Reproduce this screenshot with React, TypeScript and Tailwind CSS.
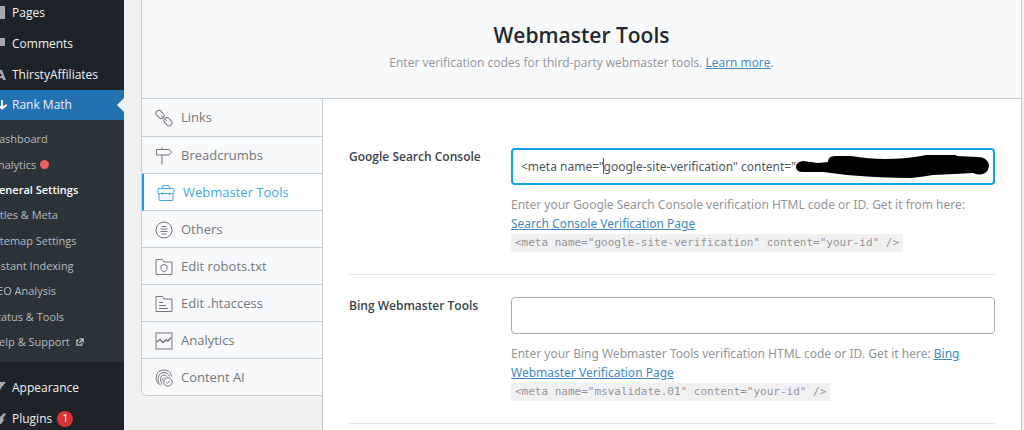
import clsx from "clsx";
import React from "react";

type IconProps = { children: React.ReactNode };

const Icon = ({ children }: IconProps) => (
  <svg viewBox="0 0 18 18" className="size-[18px] shrink-0" fill="none" stroke="currentColor" strokeWidth="1" aria-hidden="true">
    {children}
  </svg>
);

const tabs = [
  {
    label: "Links",
    icon: (
      <>
        <rect x="0.5" y="2.5" width="9" height="5.800" rx="2.900" transform="rotate(45 5 5.4)" />
        <rect x="8.500" y="9.800" width="9" height="5.800" rx="2.900" transform="rotate(45 13 12.700)" />
        <path d="M6 6.500l6 5.500" />
      </>
    ),
  },
  {
    label: "Breadcrumbs",
    icon: <path d="M7 .5v2M7 8v9.500M1.500 2.500h12.500l2.500 2.750-2.500 2.750h-12.500z" />,
  },
  {
    label: "Webmaster Tools",
    icon: (
      <>
        <rect x="1" y="4.500" width="16" height="5" rx="1" />
        <path d="M5.500 4.500V3q0-1.500 1.500-1.500h4q1.500 0 1.500 1.500v1.500M2 9.500v6q0 1 1 1h12q1 0 1-1v-6M5.500 8.500V11M12.500 8.500V11" />
      </>
    ),
  },
  {
    label: "Others",
    icon: (
      <>
        <circle cx="9" cy="9" r="8" />
        <path d="M6.500 5.500h5M5.500 8h7M5.500 10.500h7M6.500 13h5" />
      </>
    ),
  },
  {
    label: "Edit robots.txt",
    icon: (
      <>
        <path d="M1 16.500v-15h6.500l1.500 2.500h8v12.500z" />
        <path d="M9 6.500l3 1.200v2.500c0 2-1.500 3-3 3.800-1.500-.8-3-1.800-3-3.800V7.700z" />
      </>
    ),
  },
  {
    label: "Edit .htaccess",
    icon: (
      <>
        <path d="M1 16.500v-15h6.500l1.500 2.500h8v12.500z" />
        <path d="M4 7.500h4M4 10.500h7M4 13.500h9" />
      </>
    ),
  },
  {
    label: "Analytics",
    icon: (
      <>
        <rect x="1" y="1" width="16" height="16" />
        <path d="M1.500 10L5 7.500l3 3 3-2.500 2 1 3-3.500" strokeWidth="1.500" />
      </>
    ),
  },
  {
    label: "Content AI",
    icon: (
      <>
        <path d="M3 14.500C-.5 10 .8 1 9 1c4.500 0 7 3 7.500 6.500" />
        <path d="M5.500 16.500C1.500 12 2.500 3.500 9 3.500c3 0 4.800 1.700 5.400 4" />
        <path d="M7.500 15.500C4.500 12 4.800 6 9 6c1.500 0 2.500.6 3 1.700M8 12c-.6-2 0-3.500 1.500-3.500" />
        <circle cx="13" cy="13" r="4.200" />
        <path d="M11.200 13l1.300 1.300 2.300-2.600" />
      </>
    ),
  },
];

const subMenu = [
  "Dashboard",
  "Analytics",
  "General Settings",
  "Titles & Meta",
  "Sitemap Settings",
  "Instant Indexing",
  "SEO Analysis",
  "Status & Tools",
  "Help & Support",
];

type MenuItemProps = {
  label: string;
  icon: React.ReactNode;
  active?: boolean;
  count?: number;
};

const MenuItem = ({ label, icon, active, count }: MenuItemProps) => (
  <a
    href="#"
    className={clsx(
      "relative flex items-center gap-1 pl-7 text-[12px] text-[#f0f0f1]",
      active ? "h-[30px] bg-[#2271b1]" : "h-[31px]"
    )}
  >
    <svg viewBox="0 0 16 16" className="size-4 shrink-0 text-[#a7aaad]" fill="currentColor" aria-hidden="true">
      {icon}
    </svg>
    <span className="whitespace-nowrap">{label}</span>
    {count && (
      <span className="ml-px flex size-4 items-center justify-center rounded-full bg-[#d63638] text-[10px] text-white">{count}</span>
    )}
    {active && (
      <span className="absolute top-1/2 right-0 -translate-y-1/2 border-y-[7px] border-r-[7px] border-y-transparent border-r-[#f0f0f1]" />
    )}
  </a>
);

const Sidebar = () => (
  <aside className="w-[124px] shrink-0 overflow-hidden bg-[#1d2327]">
    <nav className="-ml-9 w-40">
      <div className="-mt-[3px]">
        <MenuItem label="Pages" icon={<path d="M2 1h11v13H2z" />} />
        <MenuItem label="Comments" icon={<path d="M1 2h12v8H8l-4 4v-4H1z" />} />
        <MenuItem label="ThirstyAffiliates" icon={<path d="M7 3h3l4 10h-3l-1-2H6l-1 2H2zM8 6L7 9h3z" fillRule="evenodd" />} />
        <MenuItem label="Rank Math" active icon={<path d="M9 3h2v6l4-2v2l-5 4-4-4h3z" fill="#f0f0f1" />} />
      </div>
      <ul className="grid h-[242px] auto-rows-fr bg-[#2c3338] py-[7px]">
        {subMenu.map((item) => (
          <li key={item} className="flex items-center pl-[27px]">
            <a
              href="#"
              className={clsx(
                "flex items-center text-[11px] whitespace-nowrap",
                item === "General Settings" ? "font-semibold text-white" : "text-[#b4b9be]"
              )}
            >
              {item}
              {item === "Analytics" && <span className="ml-1 size-[9px] rounded-full bg-[#ee5e5e]" />}
              {item === "Help & Support" && (
                <svg viewBox="0 0 9 9" className="ml-[6px] size-2" fill="none" stroke="currentColor" strokeWidth="1.6" aria-hidden="true">
                  <path d="M3 2.500H1v5.500h5.500V6M4 1h4v4M8 1L3.500 5.500" />
                </svg>
              )}
            </a>
          </li>
        ))}
      </ul>
      <div className="pt-[10px]">
        <MenuItem label="Appearance" icon={<path d="M4 2h10l-5 6-2 5z" />} />
        <MenuItem label="Plugins" count={1} icon={<path d="M12 2l2 1-3 4 1 2-3 4H5l2-6z" />} />
      </div>
    </nav>
  </aside>
);

type FieldProps = {
  id: string;
  label: string;
  value?: string;
  help: string;
  link: string;
  code: string;
  focused?: boolean;
};

const Field = ({ id, label, value, help, link, code, focused }: FieldProps) => (
  <div className="flex border-b border-[#dfe5ea] pt-[22px] pb-[22px]">
    <label htmlFor={id} className="w-[162px] shrink-0 text-[12px] leading-[18px] font-semibold text-[#3c434a]">
      {label}
    </label>
    <div className="min-w-0 flex-1 font-['Noto_Sans',sans-serif]">
      <div className="relative">
        <input
          id={id}
          type="text"
          defaultValue={value}
          className={clsx(
            "block h-[37px] w-full rounded bg-white px-2 text-[12px] text-[#50575e] outline-none",
            focused ? "border-2 border-[#10a0e6]" : "border border-[#a9adb3]"
          )}
        />
        {focused && (
          <>
            <span className="absolute top-[10px] left-[92px] h-4 w-px bg-[#50575e]" />
            <svg viewBox="0 0 196 24" className="absolute top-[7px] right-1 h-6 w-[196px]" fill="#000" aria-hidden="true">
              <path d="M8 6Q1 7 1 12q0 5 7 5l20 0 24 3q33 3 64 3 10-1 22-3l22-1 18-1q7 3 12 0 4-3 4-8-2-8-11-8l-21-1q-4-3-10-2-12-1-26 2-16 3-36 3-16 0-34-3L40 1q-7 0-7 6L23 8z" />
            </svg>
          </>
        )}
      </div>
      <div className="mt-[10px] text-[12px] leading-[19px] text-[#949599]">
        <p>
          {help}{" "}
          <a href="#" className="text-[#4488bf] underline">
            {link}
          </a>
        </p>
        <code className="mt-px block h-[18px] w-fit bg-[#f1f1f1] px-1 font-['DejaVu_Sans_Mono',monospace] text-[11px] leading-[18px] whitespace-nowrap">
          {code}
        </code>
      </div>
    </div>
  </div>
);

const App = () => (
  <div className="flex h-screen overflow-hidden bg-[#f0f0f1] font-['Open_Sans',sans-serif]">
    <Sidebar />
    <main className="mr-[2px] ml-[17px] flex min-w-0 flex-1 flex-col">
      <header className="flex h-[99px] shrink-0 flex-col items-center border-x border-b border-[#c3ccd5] bg-[#f8f9fb] pt-5">
        <h1 className="text-[21px] leading-[30px] font-semibold text-[#23282d]">Webmaster Tools</h1>
        <p className="mt-1 text-[12px] leading-[18px] text-[#949599]">
          Enter verification codes for third-party webmaster tools.{" "}
          <a href="#" className="text-[#4488bf] underline">
            Learn more
          </a>
          .
        </p>
      </header>
      <div className="flex min-h-0 flex-1">
        <nav className="w-[181px] shrink-0 self-start overflow-hidden rounded-bl-md border-b border-l border-[#c3ccd5]">
          {tabs.map(({ label, icon }) => (
            <a
              key={label}
              href="#"
              className={clsx(
                "flex h-[37px] items-center gap-2 border-b border-[#c3ccd5] pt-px text-[13px] first:h-[38px] last:h-[36px] last:border-b-0",
                label === "Webmaster Tools"
                  ? "-ml-px border-l-[3px] border-l-[#10a0e6] bg-white pl-[13px] text-[#3fa7e2]"
                  : "bg-[#f8f9fb] pl-[13px] text-[#74777b]"
              )}
            >
              <Icon>{icon}</Icon>
              {label}
            </a>
          ))}
        </nav>
        <section className="min-w-0 flex-1 border-x border-[#c9d0d8] bg-white px-[26px] pt-[27px]">
          <Field
            id="google"
            label="Google Search Console"
            value={'<meta name="google-site-verification" content="'}
            help="Enter your Google Search Console verification HTML code or ID. Get it from here:"
            link="Search Console Verification Page"
            code={'<meta name="google-site-verification" content="your-id" />'}
            focused
          />
          <Field
            id="bing"
            label="Bing Webmaster Tools"
            help="Enter your Bing Webmaster Tools verification HTML code or ID. Get it here:"
            link="Bing Webmaster Verification Page"
            code={'<meta name="msvalidate.01" content="your-id" />'}
          />
        </section>
      </div>
    </main>
  </div>
);

export default App;
